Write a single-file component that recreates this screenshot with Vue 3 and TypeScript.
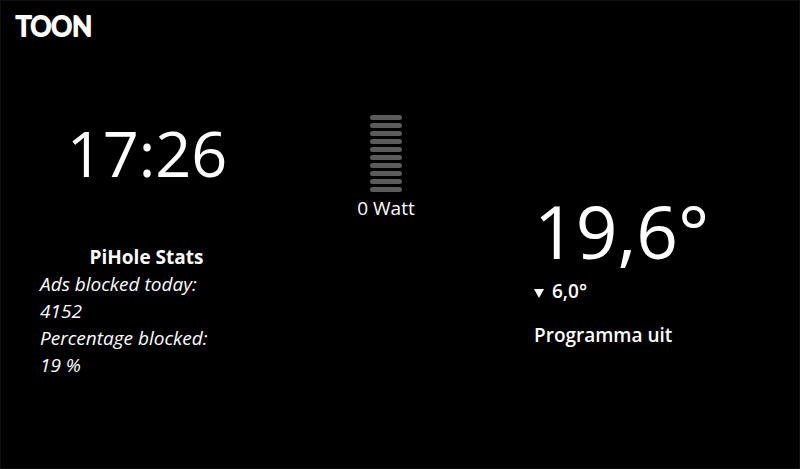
<script setup lang="ts">
interface Stat {
  label: string
  value: string
}

const time = '17:26'
const segments = 10
const power = '0 Watt'
const stats: Stat[] = [
  { label: 'Ads blocked today:', value: '4152' },
  { label: 'Percentage blocked:', value: '19 %' },
]
</script>

<template>
  <div class="screen">
    <header class="header">
      <svg class="logo" width="88" height="32" viewBox="0 0 88 32" role="img" aria-label="TOON">
        <text x="2" y="25">TOON</text>
      </svg>
    </header>
    <main class="tiles">
      <section class="left">
        <time class="clock">{{ time }}</time>
        <div class="stats">
          <h2 class="stats-title">PiHole Stats</h2>
          <dl class="stats-list">
            <template v-for="stat in stats" :key="stat.label">
              <dt>{{ stat.label }}</dt>
              <dd>{{ stat.value }}</dd>
            </template>
          </dl>
        </div>
      </section>
      <section class="power">
        <div class="meter">
          <span v-for="n in segments" :key="n" class="segment"></span>
        </div>
        <p class="watt">{{ power }}</p>
      </section>
      <section class="thermostat">
        <p class="temperature">19,6°</p>
        <p class="setpoint">
          <svg class="arrow" width="10" height="12" viewBox="0 0 10 12" aria-hidden="true">
            <polygon points="0,3 10,3 5,12" />
          </svg>
          <span>6,0°</span>
        </p>
        <p class="program">Programma uit</p>
      </section>
    </main>
  </div>
</template>

<style>
body {
  background: #000;
}
</style>

<style scoped>
.screen {
  box-sizing: border-box;
  min-height: 100vh;
  border: 1px solid #101010;
  background: #000;
  color: #fff;
  font-family: 'Open Sans', 'Noto Sans', sans-serif;
  font-size: 19px;
  line-height: 27px;
}

.header {
  padding: 10px 13px 0;
}

.logo {
  display: block;
}

.logo text {
  fill: #fff;
  stroke: #fff;
  stroke-width: 2px;
  stroke-linejoin: round;
  font-family: Lato, sans-serif;
  font-size: 26px;
  font-weight: 400;
}

.tiles {
  display: grid;
  grid-template-columns: 292fr 186fr 320fr;
  align-items: start;
  padding-top: 72px;
}

.left {
  display: flex;
  flex-direction: column;
  align-items: center;
}

.clock {
  font-size: 63px;
  line-height: 76px;
}

.stats {
  align-self: stretch;
  margin-top: 53px;
  padding-left: 39px;
}

.stats-title {
  margin: 0 40px 0 0;
  font-size: 19px;
  font-weight: 700;
  text-align: center;
}

.stats-list {
  margin: 0;
  font-style: italic;
}

.stats-list dd {
  margin: 0;
}

.power {
  display: flex;
  flex-direction: column;
  align-items: center;
}

.meter {
  display: flex;
  flex-direction: column;
  gap: 3px;
}

.segment {
  width: 32px;
  height: 5px;
  border-radius: 3px;
  background: #5c5c5c;
}

.watt {
  margin: 3px 0 0;
}

.thermostat {
  padding: 69px 0 0 55px;
}

.temperature {
  margin: 0;
  font-size: 73px;
  line-height: 94px;
}

.setpoint {
  display: flex;
  align-items: center;
  gap: 8px;
  margin: 0;
  font-weight: 600;
}

.arrow {
  fill: #fff;
}

.program {
  margin: 17px 0 0;
  font-weight: 600;
}
</style>
